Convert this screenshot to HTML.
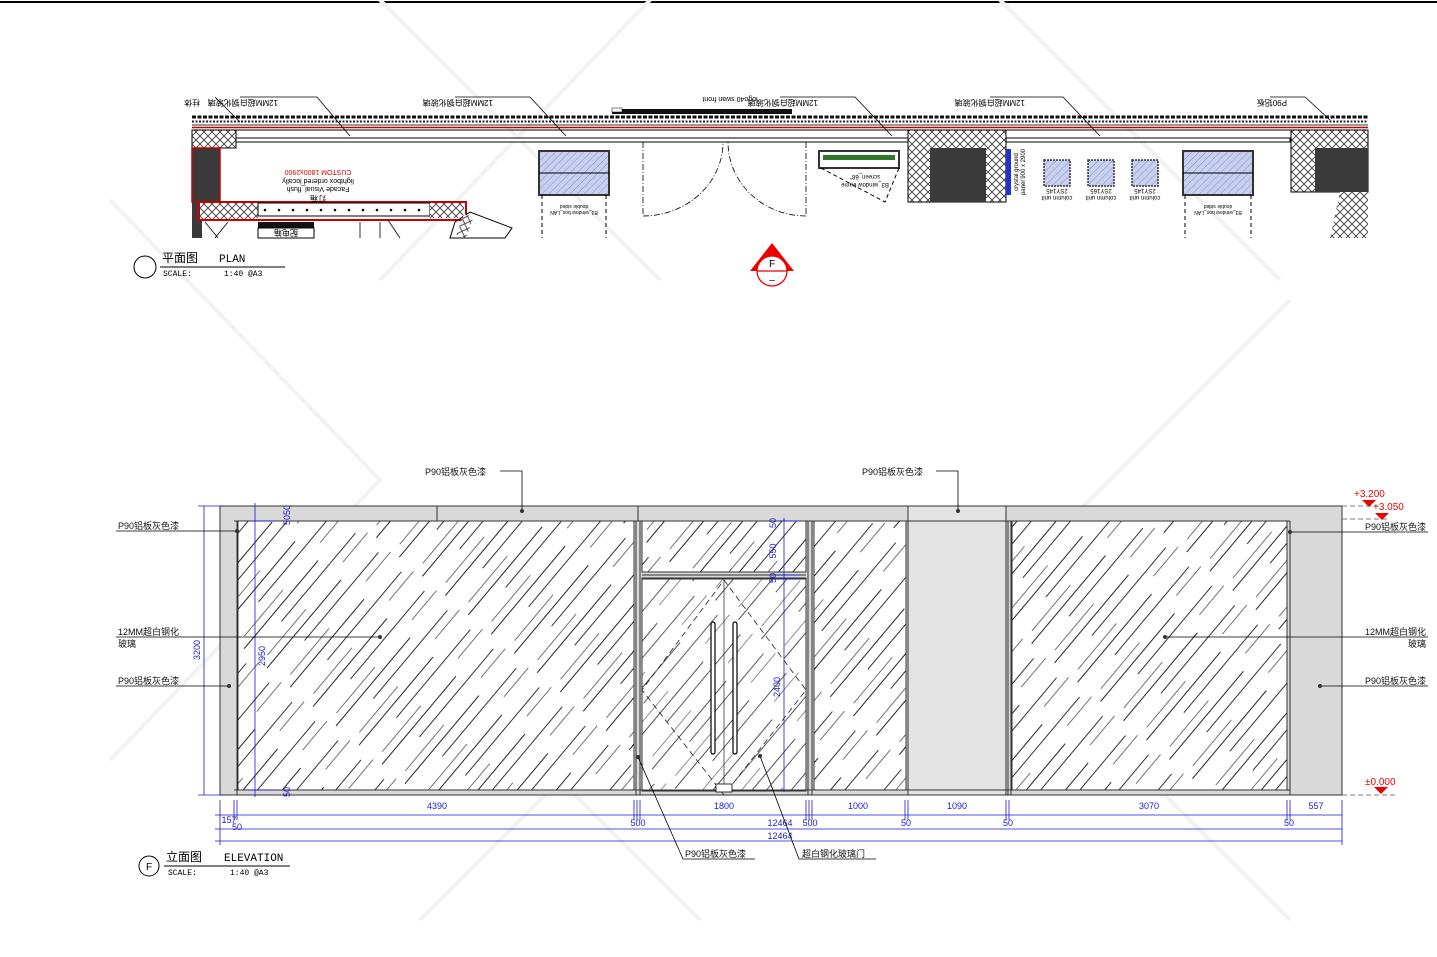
<!DOCTYPE html>
<html><head><meta charset="utf-8"><style>
html,body{margin:0;padding:0;background:#fff;}
svg{display:block;}
text{font-family:"Liberation Sans","Noto Sans CJK SC",sans-serif;}
.m{font-family:"Liberation Mono","Noto Sans CJK SC",monospace;}
</style></head><body>
<svg width="1437" height="957" viewBox="0 0 1437 957" xmlns="http://www.w3.org/2000/svg">
<defs>
<pattern id="h" width="170" height="30" patternUnits="userSpaceOnUse" patternTransform="rotate(-50)">
<line x1="0" y1="4" x2="115" y2="4" stroke="#222" stroke-width="1"/>
<line x1="45" y1="15" x2="160" y2="15" stroke="#333" stroke-width="0.9"/>
<line x1="130" y1="24" x2="168" y2="24" stroke="#444" stroke-width="0.8"/>
<line x1="10" y1="26" x2="70" y2="26" stroke="#444" stroke-width="0.8"/>
</pattern>
<pattern id="x" width="8" height="8" patternUnits="userSpaceOnUse">
<rect width="8" height="8" fill="#fff"/>
<path d="M0 0L8 8M8 0L0 8" stroke="#333" stroke-width="0.8"/>
</pattern>
<pattern id="b" width="5" height="5" patternUnits="userSpaceOnUse" patternTransform="rotate(45)">
<rect width="5" height="5" fill="#c8d0ee"/>
<line x1="0" y1="0" x2="0" y2="5" stroke="#7f8fd0" stroke-width="1"/>
</pattern>
</defs>
<rect width="1437" height="957" fill="#fff"/>
<line x1="0" y1="2" x2="1437" y2="2" stroke="#000" stroke-width="2"/>

<!-- watermark diagonals -->
<g stroke="#f2f2f2" stroke-width="4" fill="none">
<path d="M110 200L380 480L110 760M380 0L660 280M650 0L380 280M1000 0L1280 280M1290 300L1010 580M420 640L700 920M700 640L420 920M1010 640L1290 920"/>
</g>

<!-- ============ PLAN ============ -->
<g>
<line x1="192" y1="117" x2="1368" y2="117" stroke="#111" stroke-width="3" stroke-dasharray="4 1.5"/>
<line x1="192" y1="121.5" x2="1368" y2="121.5" stroke="#222" stroke-width="2" stroke-dasharray="2 1.5"/>
<line x1="192" y1="125" x2="1368" y2="125" stroke="#333" stroke-width="1"/>
<line x1="192" y1="127.5" x2="1368" y2="127.5" stroke="#b00" stroke-width="1.4"/>
<line x1="192" y1="130" x2="1368" y2="130" stroke="#000" stroke-width="1"/>
<rect x="235" y="138" width="1055" height="4" fill="#fff" stroke="#000" stroke-width="1"/>
<rect x="612" y="109" width="180" height="5" fill="#111"/>
<rect x="612" y="108" width="10" height="4" fill="#fff" stroke="#000" stroke-width="0.5"/>
<!-- left pier -->
<rect x="192" y="130" width="44" height="18" fill="url(#x)" stroke="#000"/>
<rect x="192" y="148" width="28" height="54" fill="#3a3a3a" stroke="#c00" stroke-width="1.5"/>
<rect x="192" y="202" width="10" height="36" fill="#3a3a3a"/>
<rect x="198" y="202" width="268" height="18" fill="none" stroke="#c00" stroke-width="2"/>
<rect x="200" y="203" width="58" height="16" fill="url(#x)"/>
<rect x="258" y="203" width="172" height="13" fill="#fff" stroke="#000"/>
<g fill="#000"><circle cx="265" cy="210" r="1.3"/><circle cx="279" cy="210" r="1.3"/><circle cx="293" cy="210" r="1.3"/><circle cx="307" cy="210" r="1.3"/><circle cx="321" cy="210" r="1.3"/><circle cx="335" cy="210" r="1.3"/><circle cx="349" cy="210" r="1.3"/><circle cx="363" cy="210" r="1.3"/><circle cx="377" cy="210" r="1.3"/><circle cx="391" cy="210" r="1.3"/><circle cx="405" cy="210" r="1.3"/><circle cx="419" cy="210" r="1.3"/></g>
<rect x="430" y="203" width="34" height="15" fill="url(#x)"/>
<rect x="258" y="222" width="56" height="6" fill="#111"/>
<rect x="258" y="228" width="56" height="10" fill="#fff" stroke="#000"/>
<text x="286" y="236" font-size="8" text-anchor="middle" transform="rotate(180 286 233)">配电箱</text>
<path d="M205 222L218 238M228 222L215 238M360 222V238M380 222V238M388 220L400 238" stroke="#000" stroke-width="0.8"/>
<path d="M455 222L470 212L512 228L505 238H450Z" fill="none" stroke="#000"/>
<rect x="460" y="215" width="10" height="22" fill="url(#x)" transform="rotate(20 465 226)"/>
<text x="318" y="176" font-size="7" fill="#d00" text-anchor="middle" transform="rotate(180 318 173)">CUSTOM 1800x2900</text>
<text x="318" y="185" font-size="7" text-anchor="middle" transform="rotate(180 318 182)">lightbox ordered locally</text>
<text x="318" y="193" font-size="7" text-anchor="middle" transform="rotate(180 318 190)">Facade Visual_flush</text>
<text x="318" y="202" font-size="8" text-anchor="middle" transform="rotate(180 318 199)">灯箱</text>
<!-- window boxes -->
<rect x="539" y="151" width="70" height="44" fill="url(#b)" stroke="#333" stroke-width="2"/>
<line x1="539" y1="173" x2="609" y2="173" stroke="#000"/>
<path d="M542 195V238M606 195V238" stroke="#000" stroke-dasharray="4 3"/>
<text x="574" y="207" font-size="5" text-anchor="middle" transform="rotate(180 574 206)">double sided</text>
<text x="574" y="213" font-size="5" text-anchor="middle" transform="rotate(180 574 212)">B3_window box_LAN</text>
<!-- door -->
<path d="M643 142V216M806 142V216" stroke="#000" stroke-width="0.8" stroke-dasharray="6 2 1 2" fill="none"/>
<path d="M643 216A80 74 0 0 0 723 142M806 216A78 74 0 0 1 728 142" stroke="#000" stroke-width="0.8" stroke-dasharray="6 2 1 2" fill="none"/>
<text x="730" y="103" font-size="7" text-anchor="middle" transform="rotate(180 730 100)">logo40 swan front</text>
<!-- screen -->
<rect x="819" y="151" width="80" height="17" fill="#fff" stroke="#333" stroke-width="2"/>
<rect x="823" y="155" width="72" height="5" fill="#2a7a2a"/>
<path d="M821 168L885 202L899 168" stroke="#000" stroke-dasharray="4 3" fill="none"/>
<text x="865" y="179" font-size="6" text-anchor="middle" transform="rotate(180 865 177)">screen_68"</text>
<text x="865" y="187" font-size="6" text-anchor="middle" transform="rotate(180 865 185)">B3_window frame</text>
<!-- column -->
<rect x="908" y="130" width="98" height="72" fill="url(#x)" stroke="#000"/>
<rect x="930" y="148" width="56" height="54" fill="#3a3a3a"/>
<rect x="1006" y="149" width="5" height="46" fill="#2233cc"/>
<text x="1018" y="172" font-size="6" text-anchor="middle" transform="rotate(-90 1018 172)">crystal ground</text>
<text x="1025" y="172" font-size="6" text-anchor="middle" transform="rotate(-90 1025 172)">panel 900 x 2900</text>
<g stroke="#333" stroke-width="1.5" stroke-dasharray="2 1">
<rect x="1044" y="160" width="26" height="26" fill="url(#b)"/>
<rect x="1088" y="160" width="26" height="26" fill="url(#b)"/>
<rect x="1132" y="160" width="26" height="26" fill="url(#b)"/>
</g>
<g font-size="6" text-anchor="middle">
<text x="1057" y="193" transform="rotate(180 1057 191)">2SY145</text><text x="1057" y="200" transform="rotate(180 1057 198)">column unit</text>
<text x="1101" y="193" transform="rotate(180 1101 191)">2SY165</text><text x="1101" y="200" transform="rotate(180 1101 198)">column unit</text>
<text x="1145" y="193" transform="rotate(180 1145 191)">2SY145</text><text x="1145" y="200" transform="rotate(180 1145 198)">column unit</text>
</g>
<rect x="1183" y="151" width="70" height="44" fill="url(#b)" stroke="#333" stroke-width="2"/>
<line x1="1183" y1="173" x2="1253" y2="173" stroke="#000"/>
<path d="M1185 195V238M1251 195V238" stroke="#000" stroke-dasharray="4 3"/>
<text x="1218" y="207" font-size="5" text-anchor="middle" transform="rotate(180 1218 206)">double sided</text>
<text x="1218" y="213" font-size="5" text-anchor="middle" transform="rotate(180 1218 212)">B3_window box_LAN</text>
<rect x="1291" y="130" width="77" height="62" fill="url(#x)" stroke="#000"/>
<path d="M1315 148H1368V192H1315Z" fill="#3a3a3a"/>
<path d="M1340 192L1330 238H1368V192Z" fill="url(#x)"/>
<!-- leader labels -->
<g font-size="8" stroke="none">
<text x="200" y="106" transform="rotate(180 200 103)">柱体</text>
<text x="278" y="106" transform="rotate(180 278 103)">12MM超白钢化玻璃</text>
<text x="493" y="106" transform="rotate(180 493 103)">12MM超白钢化玻璃</text>
<text x="818" y="106" transform="rotate(180 818 103)">12MM超白钢化玻璃</text>
<text x="1025" y="106" transform="rotate(180 1025 103)">12MM超白钢化玻璃</text>
<text x="1287" y="106" transform="rotate(180 1287 103)">P90铝板</text>
</g>
<path d="M215 97L240 122M240 97H317L350 136M455 97H530L566 136M780 97H855L892 136M990 97H1063L1100 136M1270 97H1305L1330 120" stroke="#000" stroke-width="0.8" fill="none"/>
</g>
<!-- plan title -->
<circle cx="145" cy="267" r="11" fill="none" stroke="#000"/>
<text x="162" y="262" font-size="12">平面图</text>
<text x="219" y="262" font-size="11" class="m">PLAN</text>
<line x1="160" y1="267" x2="285" y2="267" stroke="#000"/>
<text x="163" y="276" font-size="8" class="m">SCALE:</text>
<text x="224" y="276" font-size="8" class="m">1:40 @A3</text>
<!-- section marker -->
<path d="M750 271L772 243L794 271Z" fill="#e00"/>
<circle cx="772" cy="271" r="15" fill="#fff" stroke="#e00" stroke-width="1.3"/>
<line x1="757" y1="271" x2="787" y2="271" stroke="#e00" stroke-width="1.3"/>
<text x="772" y="267" font-size="10" text-anchor="middle">F</text>
<text x="772" y="283" font-size="10" text-anchor="middle">–</text>

<!-- ============ ELEVATION ============ -->
<g stroke="#333" stroke-width="1">
<rect x="220" y="506" width="1122" height="289" fill="#d9d9d9"/>
<rect x="908" y="506" width="98" height="289" fill="#e3e3e3"/>
<line x1="437" y1="506" x2="437" y2="521"/>
<line x1="638" y1="506" x2="638" y2="521"/>
<line x1="1006" y1="506" x2="1006" y2="795"/>
<line x1="908" y1="506" x2="908" y2="795"/>
<rect x="238" y="521" width="396" height="269" fill="#fff"/>
<rect x="238" y="521" width="396" height="269" fill="url(#h)"/>
<rect x="642" y="521" width="164" height="51" fill="#fff"/>
<rect x="642" y="521" width="164" height="51" fill="url(#h)"/>
<rect x="642" y="578" width="164" height="213" fill="#fff"/>
<rect x="642" y="578" width="164" height="213" fill="url(#h)" opacity="0.8"/>
<rect x="814" y="521" width="92" height="269" fill="#fff"/>
<rect x="814" y="521" width="92" height="269" fill="url(#h)"/>
<rect x="1012" y="521" width="275" height="269" fill="#fff"/>
<rect x="1012" y="521" width="275" height="269" fill="url(#h)"/>
<line x1="234" y1="521" x2="1290" y2="521"/>
<line x1="234" y1="790" x2="1290" y2="790"/>
<line x1="237" y1="521" x2="237" y2="795"/>
<line x1="1290" y1="521" x2="1290" y2="795"/>
<line x1="636" y1="521" x2="636" y2="795"/><line x1="640" y1="521" x2="640" y2="795"/>
<line x1="808" y1="521" x2="808" y2="795"/><line x1="812" y1="521" x2="812" y2="795"/>
<line x1="1008" y1="521" x2="1008" y2="795"/><line x1="1011" y1="521" x2="1011" y2="795"/>
<line x1="642" y1="575" x2="806" y2="575"/><line x1="642" y1="579" x2="806" y2="579"/>
</g>
<!-- door details -->
<path d="M724 580L806 690L724 795L642 690Z" fill="none" stroke="#222" stroke-width="0.8" stroke-dasharray="6 4"/>
<line x1="724" y1="580" x2="724" y2="790" stroke="#222" stroke-width="0.7"/>
<rect x="711" y="622" width="4" height="132" rx="2" fill="#fff" stroke="#000" stroke-width="1.2"/>
<rect x="733" y="622" width="4" height="132" rx="2" fill="#fff" stroke="#000" stroke-width="1.2"/>
<rect x="716" y="784" width="16" height="8" fill="#fff" stroke="#000" stroke-width="0.8"/>

<!-- dimensions blue -->
<g stroke="#1a1ad0" stroke-width="0.8" fill="none">
<line x1="204" y1="506" x2="204" y2="795"/><line x1="198" y1="506" x2="225" y2="506"/><line x1="198" y1="795" x2="225" y2="795"/>
<line x1="255" y1="503" x2="255" y2="797"/>
<line x1="248" y1="521" x2="275" y2="521"/><line x1="248" y1="790" x2="275" y2="790"/>
<line x1="784" y1="518" x2="784" y2="792"/><line x1="775" y1="521" x2="800" y2="521"/><line x1="775" y1="575" x2="800" y2="575"/><line x1="775" y1="579" x2="800" y2="579"/>
<line x1="215" y1="815" x2="1342" y2="815"/>
<line x1="215" y1="829" x2="1342" y2="829"/>
<line x1="215" y1="841" x2="1342" y2="841"/>
<path d="M220 800V845M234 800V820M237 800V820M634 800V820M637 800V820M640 800V820M806 800V820M809 800V820M812 800V820M905 800V820M908 800V820M1006 800V820M1009 800V820M1287 800V820M1290 800V820M1342 800V845"/>
</g>
<g fill="#1a1ad0" font-size="9" class="m" text-anchor="middle">
<text x="437" y="809">4390</text><text x="724" y="809">1800</text><text x="858" y="809">1000</text><text x="957" y="809">1090</text><text x="1149" y="809">3070</text><text x="1316" y="809">557</text>
<text x="229" y="823">157</text><text x="237" y="830">50</text>
<text x="638" y="826">500</text><text x="780" y="826">12464</text><text x="810" y="826">500</text><text x="906" y="826">50</text><text x="1008" y="826">50</text><text x="1289" y="826">50</text>
<text x="780" y="839">12464</text>
<text transform="translate(200 650) rotate(-90)">3200</text>
<text transform="translate(265 656) rotate(-90)">2950</text>
<text transform="translate(290 515) rotate(-90)">5050</text>
<text transform="translate(290 792) rotate(-90)">50</text>
<text transform="translate(776 551) rotate(-90)">550</text>
<text transform="translate(776 523) rotate(-90)">50</text>
<text transform="translate(776 578) rotate(-90)">50</text>
<text transform="translate(780 687) rotate(-90)">2400</text>
</g>
<!-- levels -->
<g font-size="10" fill="#e00">
<text x="1354" y="497">+3.200</text>
<text x="1373" y="510">+3.050</text>
<text x="1365" y="785">±0.000</text>
</g>
<g fill="#e00"><path d="M1362 500h14l-7 7z"/><path d="M1375 513h14l-7 7z"/><path d="M1374 787h14l-7 7z"/></g>
<path d="M1342 506H1380M1342 519H1390M1342 795H1395" stroke="#555" stroke-width="0.7" stroke-dasharray="5 3"/>

<!-- annotations -->
<g stroke="#000" stroke-width="0.8" fill="none">
<path d="M500 471H522V511M936 471H958V511"/>
<path d="M116 531H237M116 637H380M116 686H229"/>
<path d="M1290 532H1428M1165 637H1428M1320 686H1428"/>
<path d="M638 757L683 859H755M760 756L799 859H876"/>
</g>
<g fill="#333"><circle cx="522" cy="511" r="2"/><circle cx="958" cy="511" r="2"/><circle cx="237" cy="531" r="2"/><circle cx="380" cy="637" r="2"/><circle cx="229" cy="686" r="2"/><circle cx="1290" cy="532" r="2"/><circle cx="1165" cy="637" r="2"/><circle cx="1320" cy="686" r="2"/><circle cx="638" cy="757" r="2"/><circle cx="760" cy="756" r="2"/></g>
<g font-size="9" fill="#111">
<text x="425" y="475">P90铝板灰色漆</text>
<text x="862" y="475">P90铝板灰色漆</text>
<text x="118" y="529">P90铝板灰色漆</text>
<text x="118" y="635">12MM超白钢化</text>
<text x="118" y="647">玻璃</text>
<text x="118" y="684">P90铝板灰色漆</text>
<text x="1426" y="530" text-anchor="end">P90铝板灰色漆</text>
<text x="1426" y="635" text-anchor="end">12MM超白钢化</text>
<text x="1426" y="647" text-anchor="end">玻璃</text>
<text x="1426" y="684" text-anchor="end">P90铝板灰色漆</text>
<text x="685" y="857">P90铝板灰色漆</text>
<text x="802" y="857">超白钢化玻璃门</text>
</g>
<!-- elevation title -->
<circle cx="149" cy="866" r="10" fill="none" stroke="#000"/>
<text x="149" y="870" font-size="10" text-anchor="middle">F</text>
<text x="166" y="861" font-size="12">立面图</text>
<text x="224" y="861" font-size="11" class="m">ELEVATION</text>
<line x1="164" y1="866" x2="290" y2="866" stroke="#000"/>
<text x="168" y="875" font-size="8" class="m">SCALE:</text>
<text x="230" y="875" font-size="8" class="m">1:40 @A3</text>
</svg>
</body></html>
